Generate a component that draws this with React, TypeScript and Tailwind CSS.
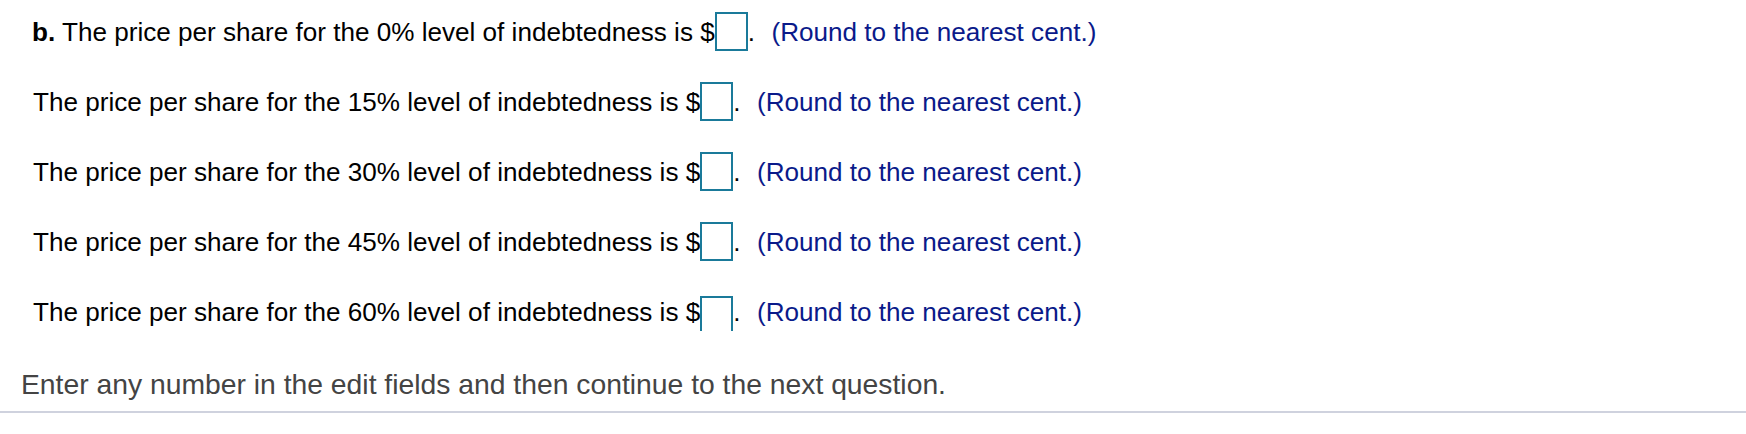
import React from "react";

const rows = [
  { bold: true, pct: "0%" },
  { bold: false, pct: "15%" },
  { bold: false, pct: "30%" },
  { bold: false, pct: "45%" },
  { bold: false, pct: "60%" },
];

export default function App() {
  return (
    <div className="w-[1746px] h-[434px] bg-white font-['Liberation_Sans',Arial,sans-serif] overflow-hidden">
      <div className="pt-[12px] flex flex-col gap-[31px]">
        {rows.map((r, i) => {
          const last = i === rows.length - 1;
          return (
            <div
              key={r.pct}
              className={`flex items-center h-[39px] text-[26.1px] leading-[30px] text-black whitespace-pre ${r.bold ? "pl-[32px]" : "pl-[33px]"}`}
            >
              {r.bold && <span className="font-bold">b.</span>}
              <span>{`${r.bold ? " " : ""}The price per share for the ${r.pct} level of indebtedness is $`}</span>
              <span
                className={`inline-block w-[33px] ${last ? "h-[35px] self-end border-t-2 border-l-2 border-r-2 border-b-0" : "h-[39px] border-2"} border-[#1a7a9a] bg-white`}
              />
              <span>{".  "}</span>
              <span className="ml-[2px] text-[#0a1a8a]">(Round to the nearest cent.)</span>
            </div>
          );
        })}
      </div>
      <div className="mt-[37px] pl-[21px] text-[28.3px] leading-[32px] text-[#444444]">
        Enter any number in the edit fields and then continue to the next question.
      </div>
      <div className="mt-[11px] h-[2px] w-full bg-[#cfd2de]" />
    </div>
  );
}
